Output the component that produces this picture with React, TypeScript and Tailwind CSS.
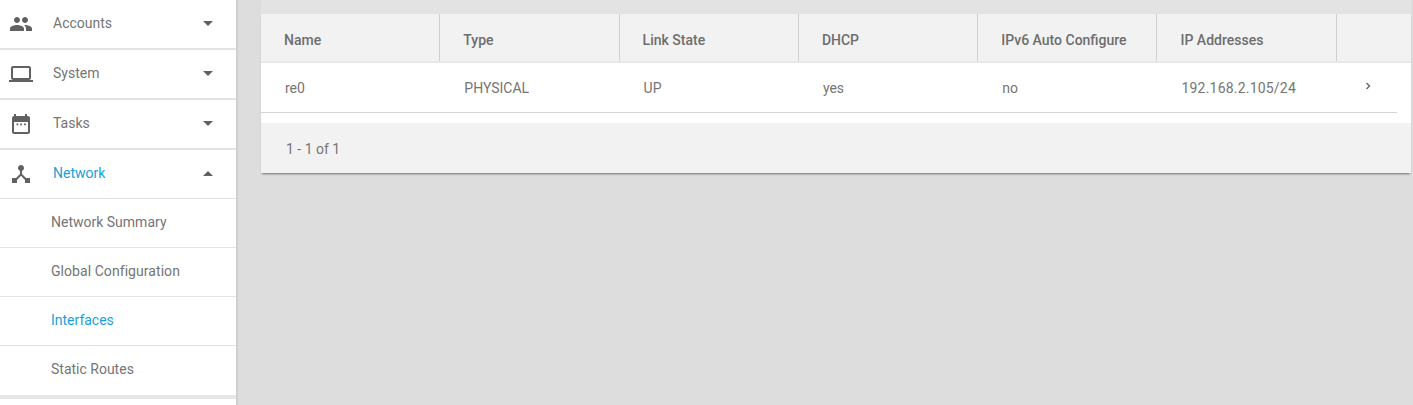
const menu = [
  {
    label: "Accounts",
    d: "M16 11c1.66 0 2.99-1.34 2.99-3S17.66 5 16 5c-1.66 0-3 1.34-3 3s1.34 3 3 3zm-8 0c1.66 0 2.99-1.34 2.99-3S9.66 5 8 5C6.34 5 5 6.34 5 8s1.34 3 3 3zm0 2c-2.33 0-7 1.17-7 3.5V19h14v-2.5c0-2.33-4.67-3.5-7-3.5zm8 0c-.29 0-.62.02-.97.05 1.16.84 1.97 1.97 1.97 3.45V19h6v-2.5c0-2.33-4.67-3.5-7-3.5z",
  },
  {
    label: "System",
    d: "M20 18c1.1 0 1.99-.9 1.99-2L22 6c0-1.1-.9-2-2-2H4c-1.1 0-2 .9-2 2v10c0 1.1.9 2 2 2H0v2h24v-2h-4zM4 6h16v10H4V6z",
  },
  {
    label: "Tasks",
    d: "M5 2h2v2h9V2h2v2h1c1.1 0 2 .9 2 2v14c0 1.1-.9 2-2 2H5c-1.1 0-2-.9-2-2V6c0-1.1.9-2 2-2V2zM5 10v10h14V10H5zM7.5 11.5h1.8v1.7H7.5zM11.2 11.5H13v1.7h-1.8zM15 11.5h1.8v1.7H15z",
  },
];

const networkIcon =
  "M17 16l-4-4V8.82C14.16 8.4 15 7.3 15 6c0-1.66-1.34-3-3-3S9 4.34 9 6c0 1.3.84 2.4 2 2.82V12l-4 4H3v5h5v-3.05l4-4.2 4 4.2V21h5v-5h-4z";

const subItems = ["Network Summary", "Global Configuration", "Interfaces", "Static Routes"];

const columns = [
  { title: "Name", value: "re0" },
  { title: "Type", value: "PHYSICAL" },
  { title: "Link State", value: "UP" },
  { title: "DHCP", value: "yes" },
  { title: "IPv6 Auto Configure", value: "no" },
  { title: "IP Addresses", value: "192.168.2.105/24" },
];

const Icon = ({ d }: { d: string }) => (
  <svg viewBox="0 0 24 24" className="mt-[2px] h-6 w-6 shrink-0 fill-[#616161] [fill-rule:evenodd]">
    <path d={d} />
  </svg>
);

const App = () => {
  return (
    <div className="flex h-[405px] w-[1413px] overflow-hidden bg-[#dddddd] font-['Roboto',sans-serif] text-sm text-[#757575] opacity-[0.999]">
      <div className="h-full w-[238px] shrink-0 border-r-2 border-[#cfcfcf] bg-white">
        {menu.map((item) => (
          <div
            key={item.label}
            className="flex h-[50px] items-center border-b-2 border-[#e3e3e3] pb-[2px] pl-[9px]"
          >
            <Icon d={item.d} />
            <span className="ml-5 flex-1">{item.label}</span>
            <span className="mr-[23px] h-0 w-0 border-x-[5px] border-t-[5px] border-x-transparent border-t-[#616161]" />
          </div>
        ))}
        <div className="flex h-[49px] items-center border-b border-[#e3e3e3] pb-[2px] pl-[9px]">
          <Icon d={networkIcon} />
          <span className="ml-5 flex-1 text-[#1a9fdb]">Network</span>
          <span className="mr-[23px] h-0 w-0 border-x-[5px] border-b-[5px] border-x-transparent border-b-[#616161]" />
        </div>
        {subItems.map((label, i) => (
          <div
            key={label}
            className={
              i === 3
                ? "flex h-[49px] items-center pb-[3px] pl-[51px]"
                : "flex h-[49px] items-center border-b border-[#e3e3e3] pb-[2px] pl-[51px]"
            }
          >
            <span
              className={
                label === "Interfaces"
                  ? "text-[#1a9fdb]"
                  : label === "Global Configuration"
                    ? "tracking-[0.06px]"
                    : ""
              }
            >
              {label}
            </span>
          </div>
        ))}
        <div className="h-1 bg-[#e6e6e6]" />
      </div>

      <div className="flex-1 pl-[23px] pr-[2px]">
        <div className="h-[14px] bg-[#e3e3e3]" />
        <div className="bg-[#f2f2f2] shadow-[0_2px_2px_-1px_rgba(0,0,0,0.5)]">
          <div className="flex h-[49px] border-b-2 border-[#e8e8e8]">
            {columns.map((col) => (
              <div
                key={col.title}
                className="flex w-[179.3px] items-center border-r border-[#cfcfcf] pl-[23px] pt-[4px] font-medium text-[#6e6e6e]"
              >
                {col.title}
              </div>
            ))}
          </div>
          <div className="h-[60px] bg-white">
            <div className="mr-[14px] flex h-[50px] items-center border-b border-[#d4d4d4] pt-[1px]">
              {columns.map((col) => (
                <div
                  key={col.title}
                  className={col.title === "IP Addresses" ? "w-[179.3px] pl-6 tracking-[0.2px]" : "w-[179.3px] pl-6"}
                >
                  {col.value}
                </div>
              ))}
              <svg viewBox="0 0 8 10" className="mb-[5px] ml-[27px] h-[10px] w-2 fill-none stroke-[#666666] stroke-[1.4]">
                <path d="M2.5 2 5.5 5 2.5 8" />
              </svg>
            </div>
          </div>
          <div className="flex h-[50px] items-center pl-[25px] pt-[2px]">1 - 1 of 1</div>
        </div>
      </div>
    </div>
  );
};

export default App;
